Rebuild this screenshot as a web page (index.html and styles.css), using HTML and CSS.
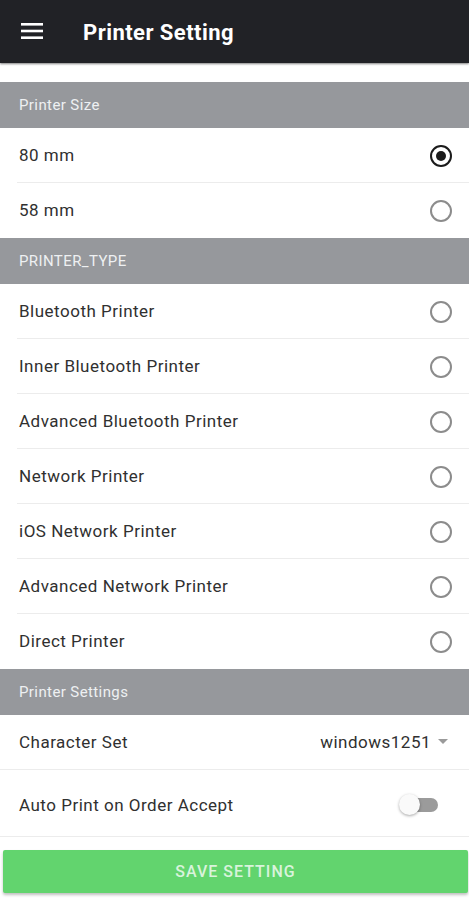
FILE: index.html
```html
<!DOCTYPE html>
<html>
<head>
<meta charset="utf-8">
<link rel="stylesheet" href="styles.css">
</head>
<body>
<div class="app">
  <header class="topbar">
    <svg class="menu" width="22" height="16" viewBox="0 0 22 16"><rect x="0" y="0" width="22" height="2.6" fill="#fff"/><rect x="0" y="6.7" width="22" height="2.6" fill="#fff"/><rect x="0" y="13.4" width="22" height="2.6" fill="#fff"/></svg>
    <h1 class="title">Printer Setting</h1>
  </header>
  <div class="spacer"></div>

  <div class="section">Printer Size</div>
  <div class="row"><span class="label">80 mm</span><span class="radio checked"></span></div>
  <div class="row last"><span class="label">58 mm</span><span class="radio"></span></div>

  <div class="section">PRINTER_TYPE</div>
  <div class="row"><span class="label">Bluetooth Printer</span><span class="radio"></span></div>
  <div class="row"><span class="label">Inner Bluetooth Printer</span><span class="radio"></span></div>
  <div class="row"><span class="label">Advanced Bluetooth Printer</span><span class="radio"></span></div>
  <div class="row"><span class="label">Network Printer</span><span class="radio"></span></div>
  <div class="row"><span class="label">iOS Network Printer</span><span class="radio"></span></div>
  <div class="row"><span class="label">Advanced Network Printer</span><span class="radio"></span></div>
  <div class="row last"><span class="label">Direct Printer</span><span class="radio"></span></div>

  <div class="section">Printer Settings</div>
  <div class="row full"><span class="label">Character Set</span><span class="select">windows1251<span class="caret"></span></span></div>
  <div class="row tall full"><span class="label">Auto Print on Order Accept</span><span class="switch"><span class="track"></span><span class="thumb"></span></span></div>

  <div class="btnwrap"><button class="save">SAVE SETTING</button></div>
</div>
</body>
</html>
```
FILE: styles.css
```css
html, body {
  margin: 0;
  padding: 0;
  background: #fff;
}
body {
  font-family: Roboto, "Noto Sans", Arial, sans-serif;
  width: 469px;
  height: 900px;
  overflow: hidden;
}
.app {
  display: flex;
  flex-direction: column;
}
.topbar {
  height: 63px;
  background: #212226;
  display: flex;
  align-items: center;
  padding-left: 21px;
  box-shadow: 0 1px 2px rgba(0,0,0,0.5);
  box-sizing: border-box;
}
.menu {
  display: block;
  margin-top: -1px;
}
.title {
  margin: 1px 0 0 40px;
  font-size: 22px;
  font-weight: 700;
  color: #fff;
  letter-spacing: 0.45px;
}
.spacer {
  height: 19px;
}
.section {
  height: 46px;
  background: #96989c;
  color: #eef0f2;
  font-size: 15px;
  letter-spacing: 0.4px;
  display: flex;
  align-items: center;
  padding-left: 19px;
  box-sizing: border-box;
}
.row {
  height: 55px;
  display: flex;
  align-items: center;
  justify-content: space-between;
  padding: 0 17px 2px 19px;
  position: relative;
  box-sizing: border-box;
}
.row::after {
  content: "";
  position: absolute;
  left: 17px;
  right: 0;
  bottom: 0;
  height: 1px;
  background: #ececec;
}
.row.full::after {
  left: 0;
}
.row.last::after {
  display: none;
}
.row.tall {
  height: 67px;
  padding-top: 4px;
}
.label {
  font-size: 17px;
  color: #303030;
  letter-spacing: 0.5px;
}
.radio {
  width: 18px;
  height: 18px;
  border: 2px solid #8c8c8c;
  border-radius: 50%;
  box-sizing: content-box;
  display: flex;
  align-items: center;
  justify-content: center;
  margin-top: 2px;
}
.radio.checked {
  border-color: #1b1b1b;
}
.radio.checked::before {
  content: "";
  width: 10px;
  height: 10px;
  border-radius: 50%;
  background: #1b1b1b;
}
.select {
  font-size: 17px;
  color: #303030;
  display: flex;
  align-items: center;
  margin-right: 4px;
  letter-spacing: 0.5px;
}
.caret {
  width: 0;
  height: 0;
  border-left: 5px solid transparent;
  border-right: 5px solid transparent;
  border-top: 5px solid #9a9a9a;
  margin-left: 7px;
}
.switch {
  position: relative;
  width: 42px;
  height: 22px;
  display: flex;
  align-items: center;
  margin-right: 12px;
}
.track {
  width: 36px;
  height: 14px;
  border-radius: 7px;
  background: #9b9b9b;
  margin-left: 4px;
}
.thumb {
  position: absolute;
  left: 1px;
  top: 0;
  width: 21px;
  height: 21px;
  border-radius: 50%;
  background: #fafafa;
  box-shadow: 0 1px 3px rgba(0,0,0,0.35);
}
.btnwrap {
  padding: 13px 1px 0 3px;
}
.save {
  width: 100%;
  height: 43px;
  border: none;
  border-radius: 2px;
  background: #62d46e;
  color: #d9f3dc;
  font-family: Roboto, "Noto Sans", Arial, sans-serif;
  font-size: 16px;
  font-weight: 500;
  letter-spacing: 1px;
  box-shadow: 0 2px 3px rgba(0,0,0,0.25);
}
```
